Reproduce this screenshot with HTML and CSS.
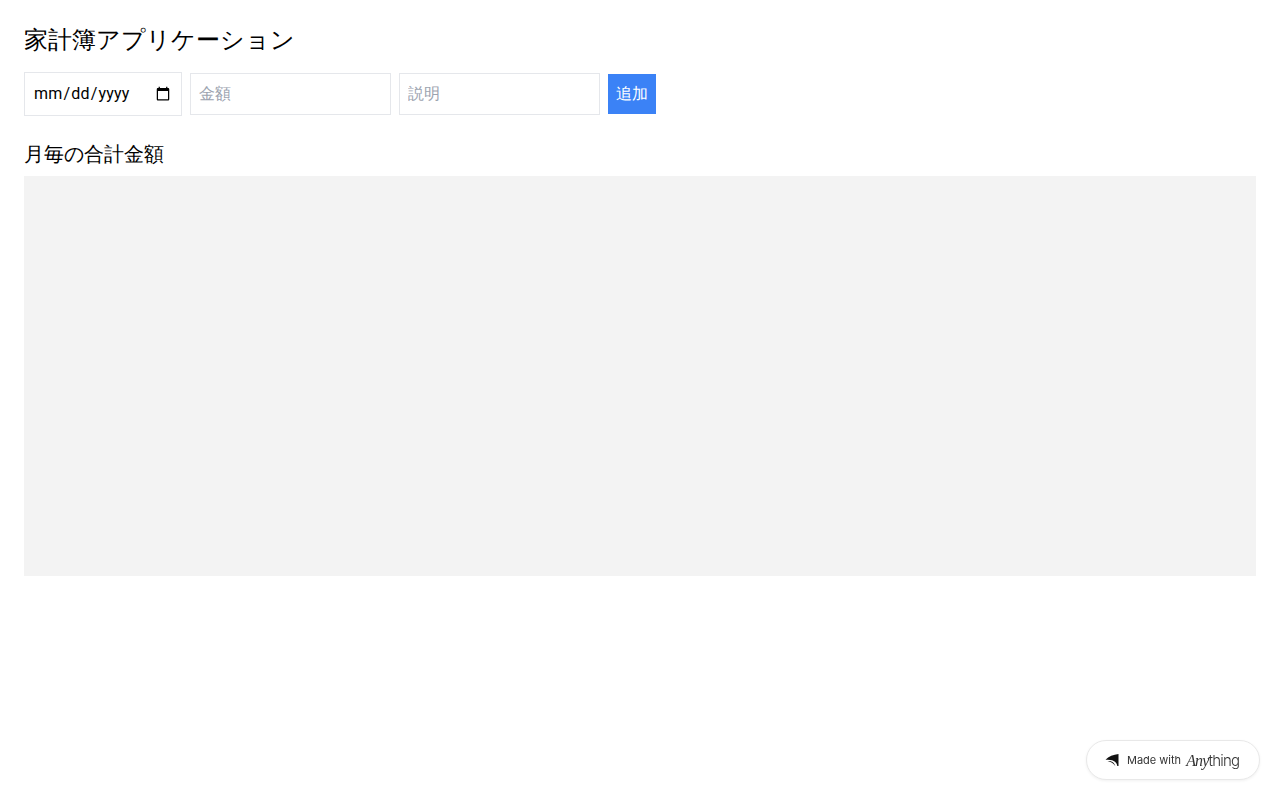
FILE: index.html
```html
<!DOCTYPE html>
<html lang="en">
<head>
<meta charset="UTF-8">
<meta name="viewport" content="width=device-width, initial-scale=1.0">
<title>家計簿アプリケーション</title>
<link rel="stylesheet" href="styles.css">
</head>
<body>
<div class="app">
    <h1 class="app-title">家計簿アプリケーション</h1>

    <form class="entry-form">
        <input class="field field-date" type="date">
        <input class="field field-text" type="text" placeholder="金額">
        <input class="field field-text" type="text" placeholder="説明">
        <button class="add-button" type="button">追加</button>
    </form>

    <h2 class="section-title">月毎の合計金額</h2>
    <div class="chart"></div>
</div>

<a class="made-with" href="#">
    <svg class="made-with-icon" width="14" height="14" viewBox="0 0 14 14">
        <path d="M0.500 6.800C3.500 3.500 8.500 1.500 13.500 1V13H12.300C12 9.500 9 6 0.500 6.800Z" fill="#111"/>
        <path d="M2.500 8C6 7.500 9.500 9.500 10.300 13C8.500 10.500 6 8.800 2.500 8Z" fill="#111"/>
    </svg>
    <span class="made-with-label">Made with</span>
    <span class="made-with-brand"><em>Any</em>thing</span>
</a>
</body>
</html>
```

FILE: styles.css
```css
* {
    box-sizing: border-box;
}

body {
    margin: 0;
    background-color: #fff;
    color: #000;
    font-family: Roboto, sans-serif;
}

.app {
    padding: 24px;
}

.app-title {
    margin: 0 0 16px;
    font-size: 24px;
    line-height: 32px;
    font-weight: 400;
}

.entry-form {
    display: flex;
    align-items: center;
    gap: 8px;
    margin-bottom: 24px;
}

.field {
    border: 1px solid #e5e7eb;
    background-color: #fff;
    font-family: inherit;
    font-size: 16px;
    border-radius: 0;
    color: #000;
}

.field::placeholder {
    color: #9ca3af;
}

.field-date {
    width: 158px;
    height: 44px;
    padding: 8px;
    line-height: 24px;
    letter-spacing: 0.2px;
}

.field-text {
    width: 201px;
    height: 42px;
    padding: 7px 8px 9px;
}

.add-button {
    height: 40px;
    padding: 8px;
    border: 0;
    background-color: #3b82f6;
    color: #fff;
    font-family: inherit;
    font-size: 16px;
    line-height: 24px;
}

.section-title {
    margin: 0 0 8px;
    font-size: 20px;
    line-height: 28px;
    font-weight: 400;
}

.chart {
    height: 400px;
    background-color: #f3f3f3;
}

.made-with {
    position: fixed;
    right: 20px;
    bottom: 20px;
    display: flex;
    align-items: center;
    width: 174px;
    height: 40px;
    padding-left: 18px;
    border: 1px solid #e8e8e8;
    border-radius: 20px;
    background-color: #fff;
    box-shadow: 0 1px 3px rgba(0, 0, 0, 0.06);
    color: #333;
    text-decoration: none;
}

.made-with-icon {
    flex: none;
    margin-right: 8px;
}

.made-with-label {
    font-family: Inter, sans-serif;
    font-size: 11px;
    margin-right: 5px;
}

.made-with-brand {
    font-family: Inter, sans-serif;
    font-size: 15px;
    letter-spacing: -0.8px;
    font-weight: 300;
}

.made-with-brand em {
    font-family: "Liberation Serif", serif;
    font-size: 16px;
    font-style: italic;
}
```
